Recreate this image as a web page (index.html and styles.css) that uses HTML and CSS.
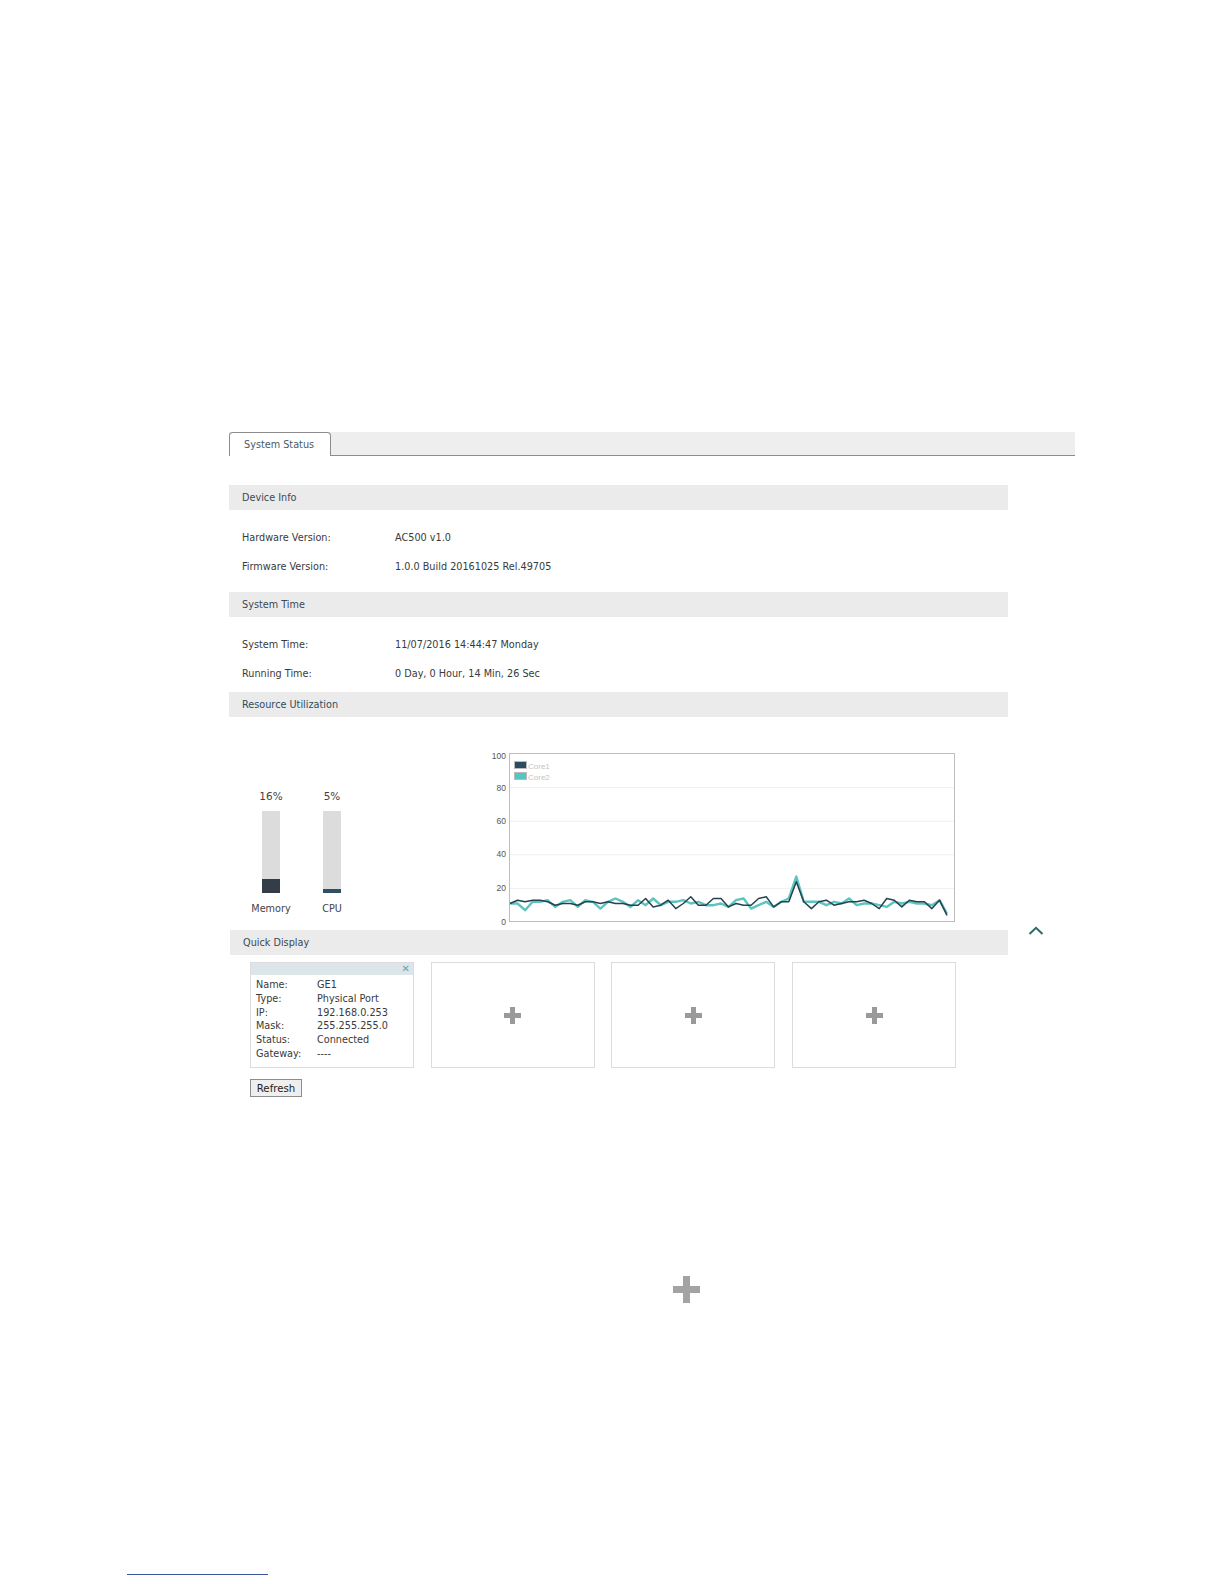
FILE: index.html
```html
<!DOCTYPE html>
<html lang="en">
<head>
    <meta charset="UTF-8">
    <title>System Status</title>
    <link rel="stylesheet" href="styles.css">
</head>
<body>
    <div class="page">
        <div class="tabbar">
            <div class="tab">System Status</div>
        </div>

        <div class="panel">
            <div class="sec-head first">Device Info</div>
            <div class="info">
                <div class="row"><span class="key">Hardware Version:</span><span>AC500 v1.0</span></div>
                <div class="row"><span class="key">Firmware Version:</span><span>1.0.0 Build 20161025 Rel.49705</span></div>
            </div>

            <div class="sec-head time-head">System Time</div>
            <div class="info">
                <div class="row"><span class="key">System Time:</span><span>11/07/2016 14:44:47 Monday</span></div>
                <div class="row"><span class="key">Running Time:</span><span>0 Day, 0 Hour, 14 Min, 26 Sec</span></div>
            </div>

            <div class="sec-head res-head">Resource Utilization</div>
            <div class="resource">
                <div class="meters">
                    <div class="meter">
                        <div class="pct">16%</div>
                        <div class="bar"><div class="fill mem" style="height: 17%"></div></div>
                        <div class="meter-label">Memory</div>
                    </div>
                    <div class="meter">
                        <div class="pct">5%</div>
                        <div class="bar"><div class="fill cpu" style="height: 5%"></div></div>
                        <div class="meter-label">CPU</div>
                    </div>
                </div>
                <svg class="chart" width="485" height="182" viewBox="0 0 485 182">
                    <g class="grid">
                        <line x1="35" y1="42.6" x2="479" y2="42.6"/>
                        <line x1="35" y1="76.2" x2="479" y2="76.2"/>
                        <line x1="35" y1="109.8" x2="479" y2="109.8"/>
                        <line x1="35" y1="143.4" x2="479" y2="143.4"/>
                    </g>
                    <rect class="frame" x="34.5" y="8.5" width="445" height="168"/>
                    <g class="ylab">
                        <text x="31" y="14">100</text>
                        <text x="31" y="46">80</text>
                        <text x="31" y="79">60</text>
                        <text x="31" y="112">40</text>
                        <text x="31" y="146">20</text>
                        <text x="31" y="180">0</text>
                    </g>
                    <polyline id="core2" class="core2" points=""/>
                    <polyline id="core1" class="core1" points=""/>
                    <rect x="39.5" y="16.5" width="12" height="7" fill="#2b4c5c" stroke="#bbb"/>
                    <rect x="39.5" y="27.5" width="12" height="7" fill="#54c6c2" stroke="#bbb"/>
                    <text class="legend" x="53" y="23.5">Core1</text>
                    <text class="legend" x="53" y="34.5">Core2</text>
                </svg>
            </div>

            <div class="quick-row">
                <div class="sec-head quick-head">Quick Display</div>
                <svg class="chevron" width="16" height="10" viewBox="0 0 16 10">
                    <polyline points="1.5,8 8,1.8 14.5,8" fill="none" stroke="#2c6b68" stroke-width="2"/>
                </svg>
            </div>

            <div class="cards">
                <div class="card">
                    <div class="card-top"><span class="close">&#x2715;</span></div>
                    <div class="card-body">
                        <div class="line"><span class="ck">Name:</span><span>GE1</span></div>
                        <div class="line"><span class="ck">Type:</span><span>Physical Port</span></div>
                        <div class="line"><span class="ck">IP:</span><span>192.168.0.253</span></div>
                        <div class="line"><span class="ck">Mask:</span><span>255.255.255.0</span></div>
                        <div class="line"><span class="ck">Status:</span><span>Connected</span></div>
                        <div class="line"><span class="ck">Gateway:</span><span>----</span></div>
                    </div>
                </div>
                <div class="card empty"><span class="plus"></span></div>
                <div class="card empty"><span class="plus"></span></div>
                <div class="card empty"><span class="plus"></span></div>
            </div>

            <button class="refresh">Refresh</button>
        </div>

        <div class="big-plus-wrap"><span class="plus big"></span></div>

        <div class="footnote-rule"></div>
    </div>

    <script>
        // cpu samples per core, read off the chart
        const core1 = [11,13,12,13,13,12,10,11,11,10,12,12,11,12,11,11,10,10,14,9,10,13,8,11,15,10,10,14,14,9,11,10,10,14,15,9,12,12,24,12,8,12,13,10,11,12,12,13,11,8,14,13,9,13,12,12,8,13,4];
        const core2 = [11,11,7,12,12,13,9,12,13,9,13,12,8,12,14,12,9,13,10,14,10,12,12,13,11,12,10,10,11,9,13,14,8,10,12,9,12,14,27,12,12,12,10,12,11,14,10,11,11,10,9,12,11,12,11,11,10,13,5];

        function toPoints(data) {
            const left = 35, right = 472, base = 177, scale = 1.68;
            const step = (right - left) / (data.length - 1);
            return data.map((v, i) => `${(left + i * step).toFixed(1)},${(base - v * scale).toFixed(1)}`).join(' ');
        }

        document.getElementById('core1').setAttribute('points', toPoints(core1));
        document.getElementById('core2').setAttribute('points', toPoints(core2));
    </script>
</body>
</html>
```

FILE: styles.css
```css
* {
    margin: 0;
    padding: 0;
    box-sizing: border-box;
}

body {
    background: #fff;
    color: #3a3a3a;
    font-family: 'DejaVu Sans', Verdana, sans-serif;
    font-size: 9.7px;
}

.page {
    padding: 432px 0 0 229px;
}

/* Tabs */
.tabbar {
    width: 846px;
    height: 24px;
    background: #eee;
    border-bottom: 1px solid #8c8c8c;
    display: flex;
    align-items: flex-end;
}

.tab {
    width: 102px;
    height: 24px;
    margin-bottom: -1px;
    background: #fff;
    border: 1px solid #8c8c8c;
    border-bottom: none;
    border-radius: 4px 4px 0 0;
    line-height: 23px;
    padding-left: 14px;
    color: #4a5a66;
}

/* Sections */
.panel {
    width: 779px;
}

.sec-head {
    height: 25px;
    line-height: 25px;
    background: #ebebeb;
    padding-left: 13px;
    color: #3c4a52;
}

.sec-head.first { margin-top: 29px; }
.sec-head.time-head { margin-top: 11px; }
.sec-head.res-head { margin-top: 4px; color: #2e4d5e; }

.info {
    padding: 13px 0 0 13px;
}

.row {
    height: 29px;
    line-height: 29px;
    display: flex;
}

.key {
    width: 153px;
}

/* Resource */
.resource {
    display: flex;
    align-items: flex-start;
    height: 213px;
}

.meters {
    display: flex;
    gap: 21px;
    margin: 73px 0 0 22px;
}

.meter {
    width: 40px;
    display: flex;
    flex-direction: column;
    align-items: center;
}

.pct {
    line-height: 12px;
    font-size: 10.5px;
    color: #444;
}

.bar {
    width: 18px;
    height: 82px;
    margin-top: 9px;
    background: #dcdcdc;
    display: flex;
    align-items: flex-end;
}

.fill { width: 100%; }
.fill.mem { background: #333d47; }
.fill.cpu { background: #2f4f63; }

.meter-label {
    margin-top: 10px;
    line-height: 12px;
    color: #444;
}

.chart {
    margin: 28px 0 0 123px;
    display: block;
}

.chart .frame {
    fill: none;
    stroke: #bdbdbd;
    stroke-width: 1;
}

.chart .grid line {
    stroke: #f0f0f0;
    stroke-width: 1;
}

.chart .ylab text {
    font-family: 'Liberation Sans', Arial, sans-serif;
    font-size: 8.5px;
    fill: #555;
    text-anchor: end;
}

.chart .legend {
    font-family: 'Liberation Sans', Arial, sans-serif;
    font-size: 8px;
    fill: #c4c4c4;
}

.core1, .core2 {
    fill: none;
    stroke-linejoin: round;
}

.core1 { stroke: #24424f; stroke-width: 1.5; }
.core2 { stroke: #5cc4bf; stroke-width: 2.4; }

/* Quick display */
.quick-row {
    display: flex;
    align-items: flex-start;
    width: 830px;
}

.quick-head {
    width: 778px;
    flex: none;
    margin-left: 1px;
}

.chevron {
    margin: -4px 0 0 20px;
}

.cards {
    display: flex;
    gap: 16.7px;
    margin: 7px 0 0 21px;
}

.card {
    width: 164px;
    height: 106px;
    border: 1px solid #dcdcdc;
    background: #fff;
}

.card-top {
    height: 12px;
    background: #dce6ea;
    text-align: right;
    padding-right: 3px;
}

.close {
    color: #7a9aa6;
    font-size: 10px;
    line-height: 12px;
}

.card-body {
    padding: 3px 0 0 5px;
}

.line {
    display: flex;
    line-height: 13.8px;
}

.ck {
    width: 61px;
}

.card.empty {
    display: flex;
    align-items: center;
    justify-content: center;
}

.plus {
    position: relative;
    width: 17px;
    height: 17px;
    display: block;
}

.plus::before,
.plus::after {
    content: '';
    position: absolute;
    background: #9a9a9a;
}

.plus::before {
    left: 6px;
    top: 0;
    width: 5px;
    height: 17px;
}

.plus::after {
    left: 0;
    top: 6px;
    width: 17px;
    height: 5px;
}

.refresh {
    margin: 11px 0 0 21px;
    width: 52px;
    height: 18px;
    background: #efefef;
    border: 1px solid #8d8d8d;
    font-family: 'DejaVu Sans', Verdana, sans-serif;
    font-size: 10.2px;
    color: #222;
}

.big-plus-wrap {
    width: 779px;
    padding: 179px 0 0 444px;
}

.plus.big {
    width: 27px;
    height: 27px;
}

.plus.big::before {
    left: 10px;
    width: 7px;
    height: 27px;
    background: #a3a3a3;
}

.plus.big::after {
    top: 10px;
    width: 27px;
    height: 7px;
    background: #a3a3a3;
}

.footnote-rule {
    width: 141px;
    height: 1px;
    background: #3b55a0;
    margin: 271px 0 0 -102px;
}
```
